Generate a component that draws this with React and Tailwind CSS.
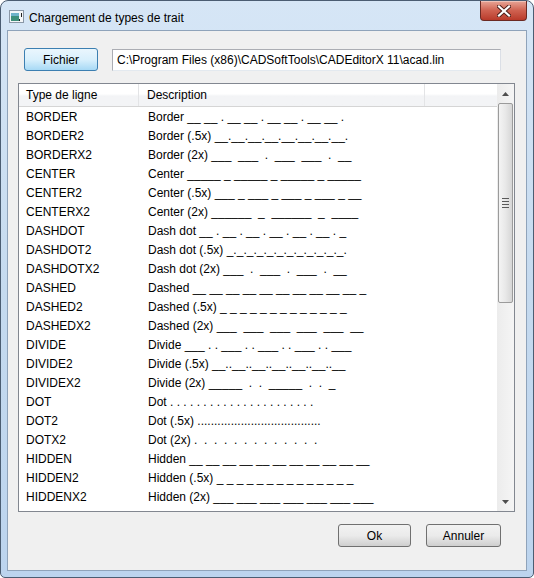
import React from 'react'

const rows = [
  ['BORDER', 'Border __ __ . __ __ . __ __ . __ __ .'],
  ['BORDER2', 'Border (.5x) __.__.__.__.__.__.__.__.'],
  ['BORDERX2', 'Border (2x) ___  ___  .  ___  ___  .  __'],
  ['CENTER', 'Center _____ _ _____ _ _____ _ _____'],
  ['CENTER2', 'Center (.5x) ___ _ ___ _ ___ _ ___ _ __'],
  ['CENTERX2', 'Center (2x) ______  _  ______  _  ____'],
  ['DASHDOT', 'Dash dot __ . __ . __ . __ . __ . __ . _'],
  ['DASHDOT2', 'Dash dot (.5x) _._._._._._._._._._._._.'],
  ['DASHDOTX2', 'Dash dot (2x) ___  .  ___  .  ___  .  __'],
  ['DASHED', 'Dashed __ __ __ __ __ __ __ __ __ __ _'],
  ['DASHED2', 'Dashed (.5x) _ _ _ _ _ _ _ _ _ _ _ _ _'],
  ['DASHEDX2', 'Dashed (2x) ___  ___  ___  ___  ___  __'],
  ['DIVIDE', 'Divide ___ . . ___ . . ___ . . ___ . . ___'],
  ['DIVIDE2', 'Divide (.5x) __..__..__..__..__..__..__'],
  ['DIVIDEX2', 'Divide (2x) _____  .  .  _____  .  .  _'],
  ['DOT', 'Dot . . . . . . . . . . . . . . . . . . . . . .'],
  ['DOT2', 'Dot (.5x) .....................................'],
  ['DOTX2', 'Dot (2x) .  .  .  .  .  .  .  .  .  .  .  .  .'],
  ['HIDDEN', 'Hidden __ __ __ __ __ __ __ __ __ __ __'],
  ['HIDDEN2', 'Hidden (.5x) _ _ _ _ _ _ _ _ _ _ _ _ _ _'],
  ['HIDDENX2', 'Hidden (2x) ___ ___ ___ ___ ___ ___ ___'],
]

const TitleIcon = () => (
  <svg width="15" height="13" viewBox="0 0 15 13">
    <rect x="0.5" y="0.5" width="14" height="12" fill="#f4f6f8" stroke="#8a97a6" />
    <rect x="2" y="3" width="8" height="8" fill="#3e8f7a" />
    <rect x="2" y="3" width="8" height="3" fill="#6fb3c9" />
    <rect x="10" y="9" width="1" height="2" fill="#222" />
    <rect x="12" y="3" width="1" height="4" fill="#222" />
  </svg>
)

const CloseGlyph = () => (
  <svg width="14" height="12" viewBox="0 0 14 12">
    <path d="M2 1.5 L12 10.5 M12 1.5 L2 10.5" stroke="#4a1d18" strokeWidth="4" strokeLinecap="square" />
    <path d="M2 1.5 L12 10.5 M12 1.5 L2 10.5" stroke="#ffffff" strokeWidth="2.2" strokeLinecap="square" />
  </svg>
)

const Arrow = ({ down }) => (
  <svg width="7" height="4" viewBox="0 0 7 4">
    <path d={down ? 'M0 0 H7 L3.5 4 Z' : 'M0 4 H7 L3.5 0 Z'} fill="#4d4d4d" />
  </svg>
)

const Button = ({ children, primary, className = '' }) => (
  <div
    className={`flex h-[23px] items-center justify-center rounded-[3px] border text-[12px] text-black ${
      primary
        ? 'border-[#3c7fb1] bg-gradient-to-b from-[#eaf6fd] via-[#d9f0fc] to-[#a7d9f5]'
        : 'border-[#707070] bg-gradient-to-b from-[#f2f2f2] via-[#ebebeb] to-[#cfcfcf]'
    } ${className}`}
  >
    {children}
  </div>
)

const Scrollbar = () => (
  <div className="flex w-[17px] flex-col bg-gradient-to-r from-[#ececec] to-[#f5f5f5]">
    <div className="flex h-[19px] items-center justify-center">
      <Arrow />
    </div>
    <div className="mx-[1px] flex h-[200px] flex-col items-center justify-center gap-[2px] rounded-[2px] border border-[#9b9b9b] bg-gradient-to-r from-[#f4f4f4] via-[#e8e8e8] to-[#d6d6d6]">
      <div className="h-[1px] w-[7px] bg-[#5a5a5a]" />
      <div className="h-[1px] w-[7px] bg-[#5a5a5a]" />
      <div className="h-[1px] w-[7px] bg-[#5a5a5a]" />
      <div className="h-[1px] w-[7px] bg-[#5a5a5a]" />
    </div>
    <div className="flex-1" />
    <div className="flex h-[19px] items-center justify-center">
      <Arrow down />
    </div>
  </div>
)

export default function App() {
  return (
    <div className="h-[578px] w-[534px] bg-white [font-family:'Liberation_Sans',Arial,sans-serif]">
      <div className="flex h-[578px] w-[534px] flex-col rounded-t-[8px] rounded-b-[5px] border border-[#4b5d72] bg-gradient-to-b from-[#d6e6f6] via-[#c5daef] to-[#bcd4ee]">
        {/* Title bar */}
        <div className="flex h-[29px] items-start pl-[8px] pr-[6px]">
          <div className="mt-[9px]">
            <TitleIcon />
          </div>
          <span className="ml-[5px] mt-[8px] text-[12px] text-black">Chargement de types de trait</span>
          <div className="ml-auto flex h-[20px] w-[47px] items-center justify-center rounded-b-[4px] border border-t-0 border-[#6b2a23] bg-gradient-to-b from-[#e7a597] via-[#cf6150] to-[#b93a2a] shadow-[inset_0_1px_0_rgba(255,255,255,0.35)]">
            <CloseGlyph />
          </div>
        </div>

        {/* Client area */}
        <div className="mx-[6px] mb-[6px] flex flex-1 flex-col border border-[#8fa3ba] bg-[#f0f0f0]">
          <div className="ml-[16px] mt-[17px] flex items-center gap-[14px]">
            <Button primary className="w-[74px]">Fichier</Button>
            <div className="flex h-[22px] w-[389px] items-center border border-[#abadb3] border-b-[#e3e9ef] border-r-[#dbdfe6] bg-white pl-[4px] text-[12px] text-black">
              C:\Program Files (x86)\CADSoftTools\CADEditorX 11\acad.lin
            </div>
          </div>

          {/* List view */}
          <div className="ml-[10px] mt-[12px] flex h-[429px] w-[497px] border border-[#828790] bg-white">
            <div className="flex flex-1 flex-col">
              <div className="flex h-[23px] border-b border-[#d5d5d5] bg-gradient-to-b from-white from-45% to-[#f3f4f6] to-55% text-[12px] text-black">
                <div className="flex w-[120px] items-center border-r border-[#e3e4e6] pl-[7px]">Type de ligne</div>
                <div className="flex w-[286px] items-center border-r border-[#e3e4e6] pl-[8px]">Description</div>
                <div className="flex-1" />
              </div>
              <div className="flex flex-col">
                {rows.map(([name, desc]) => (
                  <div key={name} className="flex h-[19px] items-center text-[12px] text-black">
                    <div className="w-[120px] pl-[7px]">{name}</div>
                    <div className="whitespace-pre pl-[9px]">{desc}</div>
                  </div>
                ))}
              </div>
            </div>
            <Scrollbar />
          </div>

          <div className="mr-[25px] mt-[12px] flex justify-end gap-[15px]">
            <Button className="w-[73px]">Ok</Button>
            <Button className="w-[75px]">Annuler</Button>
          </div>
        </div>
      </div>
    </div>
  )
}
